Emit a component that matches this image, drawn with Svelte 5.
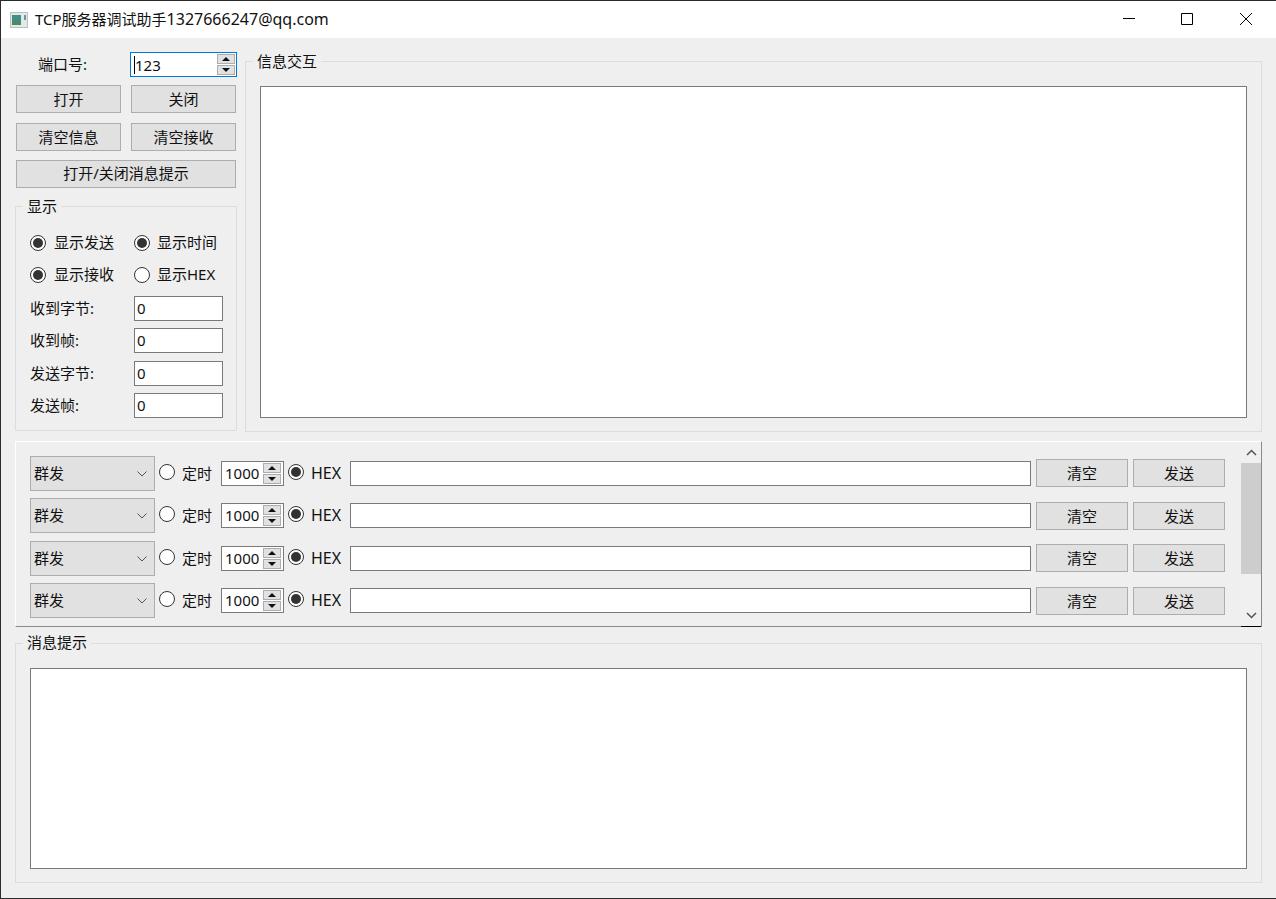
<script>
    const sendRows = [1, 2, 3, 4];
    const stats = [
        { label: "收到字节:", value: "0" },
        { label: "收到帧:", value: "0" },
        { label: "发送字节:", value: "0" },
        { label: "发送帧:", value: "0" },
    ];
</script>

{#snippet spinButtons()}
    <span class="spin-btns">
        <span class="spin-btn"><svg width="8" height="4" viewBox="0 0 8 4"><path d="M4 0 8 4H0z" /></svg></span>
        <span class="spin-btn"><svg width="8" height="4" viewBox="0 0 8 4"><path d="M0 0h8L4 4z" /></svg></span>
    </span>
{/snippet}

{#snippet radio(on, label)}
    <span class="radio-item">
        <span class="radio" class:on></span>
        <span class="txt">{label}</span>
    </span>
{/snippet}

<div class="window">
    <header class="titlebar">
        <svg class="app-icon" width="18" height="16" viewBox="0 0 18 16">
            <defs>
                <linearGradient id="ico" x1="0" y1="0" x2="0" y2="1">
                    <stop offset="0" stop-color="#3f8f9b" />
                    <stop offset="1" stop-color="#4f8a5a" />
                </linearGradient>
            </defs>
            <rect x="0.5" y="0.5" width="17" height="15" fill="#e4e8e8" stroke="#b9c0c0" />
            <rect x="2" y="3" width="9" height="10" fill="url(#ico)" />
            <rect x="14" y="3" width="2" height="5" fill="#5f9a9f" />
        </svg>
        <span class="title txt">TCP服务器调试助手<span class="mail">1327666247@qq.com</span></span>
        <div class="controls">
            <svg width="12" height="12" viewBox="0 0 12 12"><path d="M0 5.5h12" /></svg>
            <svg width="12" height="12" viewBox="0 0 12 12"><path d="M.5.5h11v11H.5z" /></svg>
            <svg width="12" height="12" viewBox="0 0 12 12"><path d="M0 0l12 12M12 0 0 12" /></svg>
        </div>
    </header>

    <main class="content">
        <section class="top">
            <div class="left">
                <div class="port-row">
                    <span class="port-label txt">端口号:</span>
                    <div class="port-spin">
                        <span class="caret"></span><span>123</span>
                        {@render spinButtons()}
                    </div>
                </div>
                <div class="btn-grid first">
                    <button>打开</button>
                    <button>关闭</button>
                </div>
                <div class="btn-grid second">
                    <button>清空信息</button>
                    <button>清空接收</button>
                </div>
                <button class="wide">打开/关闭消息提示</button>

                <div class="group display">
                    <span class="legend">显示</span>
                    <div class="radio-row">
                        {@render radio(true, "显示发送")}
                        {@render radio(true, "显示时间")}
                    </div>
                    <div class="radio-row">
                        {@render radio(true, "显示接收")}
                        {@render radio(false, "显示HEX")}
                    </div>
                    <div class="stats">
                        {#each stats as s}
                            <div class="stat">
                                <span class="stat-label txt">{s.label}</span>
                                <span class="field stat-value">{s.value}</span>
                            </div>
                        {/each}
                    </div>
                </div>
            </div>

            <div class="group info">
                <span class="legend">信息交互</span>
                <div class="textbox info-box"></div>
            </div>
        </section>

        <section class="send-area">
            <div class="send-rows">
                {#each sendRows as r}
                    <div class="send-row">
                        <div class="combo">
                            <span class="txt">群发</span>
                            <svg width="10" height="6" viewBox="0 0 10 6"><path d="M.5.5 5 5 9.5.5" /></svg>
                        </div>
                        <span class="radio timer-radio"></span>
                        <span class="timer-label txt">定时</span>
                        <div class="field interval">
                            <span class="txt">1000</span>
                            {@render spinButtons()}
                        </div>
                        <span class="radio on hex-radio"></span>
                        <span class="hex-label txt">HEX</span>
                        <div class="field line"></div>
                        <button class="small">清空</button>
                        <button class="small">发送</button>
                    </div>
                {/each}
            </div>
            <div class="scrollbar">
                <svg width="11" height="7" viewBox="0 0 11 7"><path d="M1 6l4.5-4.5L10 6" /></svg>
                <div class="track"><div class="thumb"></div></div>
                <svg width="11" height="7" viewBox="0 0 11 7"><path d="M1 1l4.5 4.5L10 1" /></svg>
            </div>
        </section>

        <section class="group messages">
            <span class="legend">消息提示</span>
            <div class="textbox msg-box"></div>
        </section>
    </main>
</div>

<style>
    :global(body) {
        background: #2b2b2b;
    }

    * {
        box-sizing: border-box;
    }

    .window {
        width: 1276px;
        height: 899px;
        border-top: 1px solid #2b2b2b;
        border-left: 1px solid #2b2b2b;
        border-bottom: 1px solid #2b2b2b;
        display: flex;
        flex-direction: column;
        overflow: hidden;
        font-family: "Noto Sans", "Noto Sans CJK SC", sans-serif;
        font-size: 15px;
        color: #111;
    }

    /* the CJK glyphs sit a pixel low against the reference */
    .txt {
        padding-bottom: 2px;
    }

    .titlebar {
        height: 37px;
        flex: none;
        background: #fff;
        display: flex;
        align-items: center;
        padding-left: 9px;
    }

    .app-icon {
        margin-top: 1px;
    }

    .title {
        margin-left: 7px;
        font-size: 15px;
    }

    .mail {
        font-size: 16px;
    }

    .controls {
        margin-left: auto;
        display: flex;
        gap: 46px;
        padding-right: 24px;
        margin-bottom: 1px;
    }

    .controls svg {
        fill: none;
        stroke: #000;
        stroke-width: 1;
    }

    .controls svg:nth-child(2) {
        margin-right: 1px;
    }

    .content {
        flex: 1;
        background: #efefef;
        padding-left: 14px;
        display: flex;
        flex-direction: column;
    }

    .top {
        display: flex;
        gap: 8px;
        height: 393px;
    }

    .left {
        width: 222px;
        padding-top: 14px;
        display: flex;
        flex-direction: column;
    }

    .port-row {
        display: flex;
        align-items: center;
        height: 25px;
        padding-left: 23px;
    }

    .port-label {
        width: 92px;
    }

    .port-spin {
        width: 107px;
        height: 25px;
        border: 1px solid #0078d7;
        background: #fff;
        display: flex;
        align-items: center;
        padding-left: 3px;
        padding-right: 1px;
    }

    .caret {
        width: 1px;
        height: 18px;
        background: #000;
    }

    .spin-btns {
        margin-left: auto;
        width: 18px;
        height: 21px;
        display: flex;
        flex-direction: column;
        gap: 1px;
    }

    .spin-btn {
        flex: 1;
        background: #e1e1e1;
        border: 1px solid #adadad;
        display: flex;
        align-items: center;
        justify-content: center;
    }

    .spin-btn svg {
        fill: #111;
    }

    button {
        font: inherit;
        color: inherit;
        background: #e1e1e1;
        border: 1px solid #adadad;
        border-radius: 0;
        padding: 0 0 2px;
        height: 28px;
    }

    .btn-grid {
        display: grid;
        grid-template-columns: 105px 105px;
        gap: 10px;
        margin-left: 1px;
    }

    .btn-grid.first {
        margin-top: 8px;
    }

    .btn-grid.second {
        margin-top: 10px;
    }

    .wide {
        width: 220px;
        margin-left: 1px;
        margin-top: 9px;
    }

    .group {
        position: relative;
        border: 1px solid #dcdcdc;
    }

    .legend {
        position: absolute;
        left: 7px;
        top: -11px;
        padding: 0 4px;
        line-height: 20px;
        background: #efefef;
    }

    .messages .legend {
        top: -12px;
    }

    .display {
        margin-top: 18px;
        height: 226px;
        padding: 20px 0 0 14px;
    }

    .radio-row {
        display: grid;
        grid-template-columns: 104px 1fr;
        height: 32px;
        align-items: center;
    }

    .radio-item {
        display: flex;
        align-items: center;
        gap: 8px;
    }

    .radio-item:nth-child(2) {
        gap: 7px;
    }

    .radio {
        width: 16px;
        height: 16px;
        flex: none;
        border-radius: 50%;
        border: 1.5px solid #333;
        background: #fff;
        display: inline-flex;
        align-items: center;
        justify-content: center;
    }

    .radio.on::after {
        content: "";
        width: 10px;
        height: 10px;
        border-radius: 50%;
        background: #333;
    }

    .stats {
        margin-top: 5px;
        display: flex;
        flex-direction: column;
        gap: 7px;
    }

    .stat {
        display: flex;
        align-items: center;
        height: 25px;
    }

    .stat:nth-child(3) {
        margin-top: 1px;
    }

    .stat-label {
        width: 104px;
    }

    .field {
        background: #fff;
        border: 1px solid #7a7a7a;
        height: 25px;
        display: flex;
        align-items: center;
        padding-left: 2px;
    }

    .stat-value {
        width: 89px;
    }

    .info {
        margin-top: 23px;
        width: 1017px;
        height: 371px;
        padding: 24px 14px 0 14px;
    }

    .textbox {
        background: #fff;
        border: 1px solid #7a7a7a;
    }

    .info-box {
        height: 332px;
    }

    .send-area {
        margin-top: 10px;
        width: 1247px;
        height: 186px;
        display: flex;
        border-top: 1px solid #fff;
        border-left: 1px solid #fff;
        border-bottom: 1px solid #8a8a8a;
        border-right: 1px solid #8a8a8a;
    }

    .send-rows {
        width: 1225px;
        padding: 14px 0 0 14px;
    }

    .send-row {
        display: flex;
        align-items: center;
        height: 35px;
        margin-bottom: 7px;
    }

    .send-row:nth-child(2) {
        margin-bottom: 8px;
    }

    .combo {
        width: 125px;
        height: 35px;
        background: #e1e1e1;
        border: 1px solid #adadad;
        display: flex;
        align-items: center;
        justify-content: space-between;
        padding: 0 7px 0 3px;
    }

    .combo svg {
        fill: none;
        stroke: #555;
    }

    .timer-radio {
        margin: -4px 0 0 4px;
    }

    .timer-label {
        margin-left: 7px;
        width: 39px;
    }

    .interval {
        width: 63px;
        padding: 0 2px 0 3px;
    }

    .hex-radio {
        margin: -4px 0 0 4px;
    }

    .hex-label {
        margin-left: 7px;
        width: 39px;
        font-size: 16px;
    }

    .line {
        width: 681px;
    }

    .small {
        width: 92px;
        margin-left: 5px;
        align-self: flex-start;
        margin-top: 3px;
    }

    .send-row:nth-child(even) .small {
        margin-top: 4px;
    }

    .scrollbar {
        width: 20px;
        display: flex;
        flex-direction: column;
        align-items: center;
        background: #f0f0f0;
        box-shadow: 0 1px 0 #000;
    }

    .scrollbar svg {
        flex: none;
        margin: 7px 0;
        fill: none;
        stroke: #555;
        stroke-width: 1.5;
    }

    .track {
        flex: 1;
        width: 100%;
    }

    .thumb {
        height: 111px;
        background: #cdcdcd;
    }

    .messages {
        margin-top: 16px;
        width: 1247px;
        height: 240px;
        padding: 24px 14px 0 14px;
    }

    .msg-box {
        height: 201px;
    }
</style>
